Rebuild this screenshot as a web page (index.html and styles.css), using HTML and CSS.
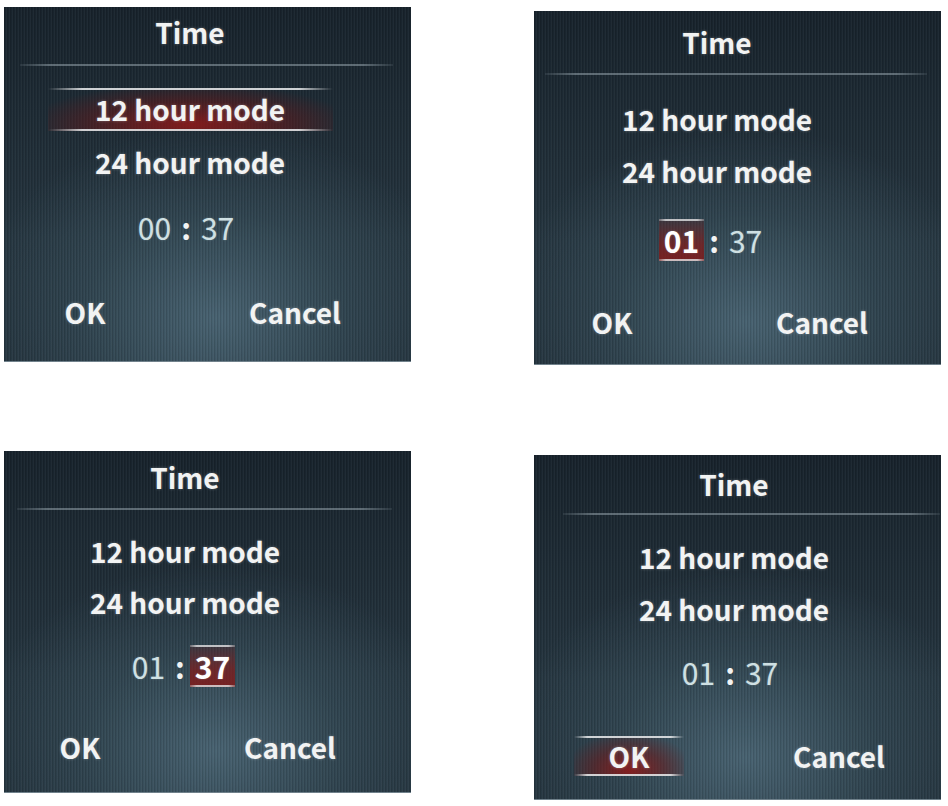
FILE: index.html
```html
<!DOCTYPE html>
<html lang="en">
<head>
<meta charset="utf-8">
<title>Time settings</title>
<link rel="stylesheet" href="styles.css">
</head>
<body>
<div class="sheet">
  <section class="panel p1">
    <div class="head"><h2 class="title">Time</h2></div>
    <div class="rule"></div>
    <div class="body">
      <div class="modes">
        <div class="mode hl">12 hour mode</div>
        <div class="mode">24 hour mode</div>
      </div>
      <div class="clock"><span class="seg">00</span><span class="colon">:</span><span class="seg">37</span></div>
      <div class="btns"><div class="btn">OK</div><div class="btn">Cancel</div></div>
    </div>
  </section>

  <section class="panel p2">
    <div class="head"><h2 class="title">Time</h2></div>
    <div class="rule"></div>
    <div class="body">
      <div class="modes">
        <div class="mode">12 hour mode</div>
        <div class="mode">24 hour mode</div>
      </div>
      <div class="clock"><span class="seg sel">01</span><span class="colon">:</span><span class="seg">37</span></div>
      <div class="btns"><div class="btn">OK</div><div class="btn">Cancel</div></div>
    </div>
  </section>

  <section class="panel p3">
    <div class="head"><h2 class="title">Time</h2></div>
    <div class="rule"></div>
    <div class="body">
      <div class="modes">
        <div class="mode">12 hour mode</div>
        <div class="mode">24 hour mode</div>
      </div>
      <div class="clock"><span class="seg">01</span><span class="colon">:</span><span class="seg sel">37</span></div>
      <div class="btns"><div class="btn">OK</div><div class="btn">Cancel</div></div>
    </div>
  </section>

  <section class="panel p4">
    <div class="head"><h2 class="title">Time</h2></div>
    <div class="rule"></div>
    <div class="body">
      <div class="modes">
        <div class="mode">12 hour mode</div>
        <div class="mode">24 hour mode</div>
      </div>
      <div class="clock"><span class="seg">01</span><span class="colon">:</span><span class="seg">37</span></div>
      <div class="btns"><div class="btn hl">OK</div><div class="btn">Cancel</div></div>
    </div>
  </section>
</div>
</body>
</html>
```
FILE: styles.css
```css
* { box-sizing: border-box; margin: 0; padding: 0; }

body {
  margin: 0;
  width: 948px;
  height: 806px;
  overflow: hidden;
  background: #ffffff;
  font-family: "Noto Sans CJK SC", "Noto Sans", sans-serif;
  color: #f2f3f3;
}

.sheet {
  display: grid;
  grid-template-columns: 407px 407px;
  column-gap: 123px;
  row-gap: 86px;
  padding: 7px 0 0 4px;
  align-items: start;
}

.panel {
  display: flex;
  flex-direction: column;
  overflow: hidden;
  border-bottom: 1px solid rgba(150, 170, 180, 0.7);
  background:
    repeating-linear-gradient(90deg, rgba(0, 0, 0, 0.1) 0 1px, rgba(0, 0, 0, 0) 1px 2px, rgba(255, 255, 255, 0.03) 2px 3px),
    radial-gradient(ellipse 60% 55% at 52% 88%, rgba(84, 114, 130, 0.75), rgba(70, 98, 112, 0.35) 55%, rgba(60, 85, 100, 0) 100%),
    linear-gradient(180deg, #18232c 0%, #1e2b35 30%, #25353f 65%, #23323c 100%);
}

.p1 { height: 355px; --pt: 4px; --hpb: 11px; --rl: 16px; --rr: 18px; --shift: 35px; --g-rule: 22px; --g-item: 10px; --g-time: 22px; --g-btn: 43px; }
.p2 { height: 354px; margin-top: 4px; --pt: 10px; --hpb: 10px; --rl: 11px; --rr: 14px; --shift: 41px; --g-rule: 23px; --g-item: 9px; --g-time: 26px; --g-btn: 40px; }
.p3 { height: 342px; --pt: 5px; --hpb: 10px; --rl: 13px; --rr: 19px; --shift: 45px; --g-rule: 20px; --g-item: 8px; --g-time: 21px; --g-btn: 39px; }
.p4 { height: 345px; margin-top: 4px; --pt: 8px; --hpb: 8px; --rl: 29px; --rr: 1px; --shift: 7px; --g-rule: 21px; --g-item: 9px; --g-time: 20px; --g-btn: 43px; }

.head {
  padding: var(--pt) var(--shift) var(--hpb) 0;
  text-align: center;
}

.title {
  font-size: 28px;
  line-height: 42px;
  font-weight: 700;
  color: #f2f3f3;
  text-shadow: 0 0 3px rgba(255, 255, 255, 0.3);
}

.rule {
  height: 2px;
  margin: 0 var(--rr) 0 var(--rl);
  background: linear-gradient(90deg, rgba(170, 185, 195, 0.1), rgba(175, 190, 198, 0.45) 8%, rgba(175, 190, 198, 0.45) 92%, rgba(170, 185, 195, 0.1));
}

.body {
  display: flex;
  flex-direction: column;
  align-items: center;
  padding-right: var(--shift);
}

.modes {
  margin-top: var(--g-rule);
  display: flex;
  flex-direction: column;
  gap: var(--g-item);
}

.mode {
  width: 285px;
  height: 43px;
  line-height: 43px;
  text-align: center;
  font-size: 28px;
  font-weight: 700;
  text-shadow: 0 0 3px rgba(255, 255, 255, 0.3);
}

.hl {
  background:
    linear-gradient(90deg, rgba(215, 218, 220, 0), rgba(225, 227, 229, 0.9) 12%, rgba(225, 227, 229, 0.9) 88%, rgba(215, 218, 220, 0)) top / 100% 2px no-repeat,
    linear-gradient(90deg, rgba(215, 218, 220, 0), rgba(225, 227, 229, 0.9) 12%, rgba(225, 227, 229, 0.9) 88%, rgba(215, 218, 220, 0)) bottom / 100% 2px no-repeat,
    radial-gradient(ellipse 58% 95% at 50% 85%, rgba(140, 26, 26, 0.9), rgba(110, 22, 22, 0.5) 55%, rgba(90, 20, 20, 0) 100%);
}

.clock {
  margin-top: var(--g-time);
  margin-right: 8px;
  display: flex;
  height: 42px;
  line-height: 42px;
  font-size: 30px;
}

.seg {
  padding: 0 5px;
  color: #cfe0e3;
  font-weight: 400;
  text-shadow: 0 0 2px rgba(220, 240, 245, 0.3);
}

.seg.sel {
  color: #ffffff;
  font-weight: 700;
  background:
    linear-gradient(90deg, rgba(215, 218, 220, 0.3), rgba(225, 227, 229, 0.8) 15%, rgba(225, 227, 229, 0.8) 85%, rgba(215, 218, 220, 0.3)) top / 100% 2px no-repeat,
    linear-gradient(90deg, rgba(215, 218, 220, 0.3), rgba(225, 227, 229, 0.8) 15%, rgba(225, 227, 229, 0.8) 85%, rgba(215, 218, 220, 0.3)) bottom / 100% 2px no-repeat,
    linear-gradient(180deg, rgba(90, 28, 30, 0.25) 0%, rgba(125, 28, 28, 0.75) 60%, rgba(130, 26, 26, 0.85) 100%);
}

.colon {
  margin: 0 5px;
  font-weight: 700;
  color: #f2f3f3;
}

.btns {
  margin-top: var(--g-btn);
  display: flex;
  gap: 100px;
}

.btn {
  width: 110px;
  height: 43px;
  line-height: 43px;
  text-align: center;
  font-size: 28px;
  font-weight: 700;
  white-space: nowrap;
  text-shadow: 0 0 3px rgba(255, 255, 255, 0.3);
}

.p4 .btn {
  height: 40px;
  line-height: 40px;
}
```
